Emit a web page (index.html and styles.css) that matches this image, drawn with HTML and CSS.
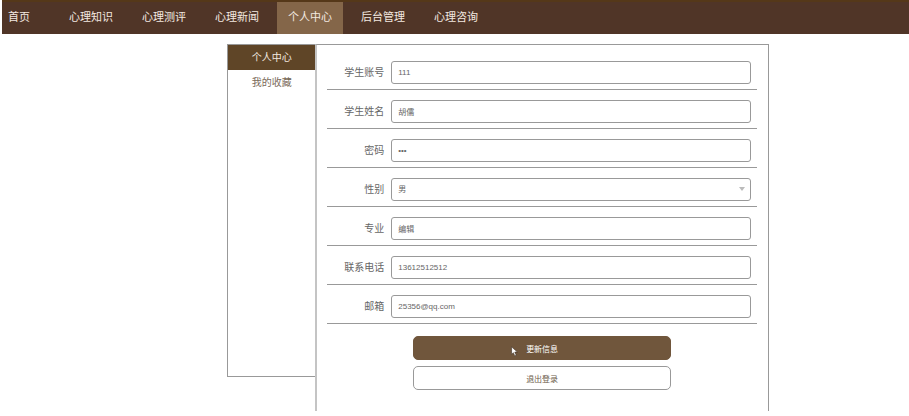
FILE: index.html
```html
<!DOCTYPE html>
<html lang="zh-CN">
<head>
    <meta charset="UTF-8">
    <meta name="viewport" content="width=device-width, initial-scale=1.0">
    <title>个人中心</title>
    <link rel="stylesheet" href="styles.css">
</head>
<body>

    <nav class="navbar">
        <a class="home" href="#">首页</a>
        <a href="#">心理知识</a>
        <a href="#">心理测评</a>
        <a href="#">心理新闻</a>
        <a class="active" href="#">个人中心</a>
        <a href="#">后台管理</a>
        <a href="#">心理咨询</a>
    </nav>

    <div class="center-container">
        <div class="side-menu">
            <a class="active" href="#">个人中心</a>
            <a href="#">我的收藏</a>
        </div>

        <form class="user-form">
            <div class="form-group">
                <label for="account">学生账号</label>
                <input type="text" id="account" name="account" value="111">
            </div>
            <div class="form-group">
                <label for="username">学生姓名</label>
                <input type="text" id="username" name="username" value="胡儒">
            </div>
            <div class="form-group">
                <label for="password">密码</label>
                <input type="password" id="password" name="password" value="111">
            </div>
            <div class="form-group">
                <label for="gender">性别</label>
                <div class="select-box">
                    <select id="gender" name="gender">
                        <option selected>男</option>
                        <option>女</option>
                    </select>
                </div>
            </div>
            <div class="form-group">
                <label for="major">专业</label>
                <input type="text" id="major" name="major" value="编辑">
            </div>
            <div class="form-group">
                <label for="phone">联系电话</label>
                <input type="text" id="phone" name="phone" value="13612512512">
            </div>
            <div class="form-group">
                <label for="email">邮箱</label>
                <input type="text" id="email" name="email" value="25356@qq.com">
            </div>

            <div class="buttons">
                <button type="button" class="btn-update">更新信息
                    <svg class="pointer" viewBox="0 0 12 18" aria-hidden="true">
                        <path d="M1 1v13l3-3 2.500 5.500 2.500-1-2.500-5.500h4.500z" fill="#fff" stroke="#3a2c20" stroke-width="1"/>
                    </svg>
                </button>
                <button type="button" class="btn-logout">退出登录</button>
            </div>
        </form>
    </div>

</body>
</html>
```
FILE: styles.css
```css
body {
    font-family: "Liberation Sans", "Noto Sans CJK SC", sans-serif;
    margin: 0;
    background-color: #fff;
}

a {
    text-decoration: none;
}

/* top navigation */
.navbar {
    display: flex;
    gap: 7px;
    height: 34px;
    margin-left: 2px;
    box-sizing: border-box;
    background-color: #503527;
    border-top: 2px solid #553819;
}

.navbar a {
    padding: 0 11px;
    color: #f3e9e0;
    font-size: 11px;
    line-height: 30px;
}

.navbar .home {
    padding: 0 21px 0 6px;
}

.navbar .active {
    background-color: #846649;
}

/* side menu and form */
.center-container {
    display: flex;
    align-items: flex-start;
    padding: 10px 140px 5px 25%;
}

.side-menu {
    flex: 0 0 88px;
    height: 333px;
    box-sizing: border-box;
    border: 1px solid #999;
    border-right: none;
}

.side-menu a {
    display: block;
    color: #7a6a5a;
    font-size: 10px;
    line-height: 25px;
    text-align: center;
}

.side-menu .active {
    background-color: #5f4527;
    color: #f3e9e0;
}

.user-form {
    flex: 1;
    min-height: 367px;
    box-sizing: border-box;
    padding: 6px 11px 0 10px;
    border: 1px solid #999;
    border-left: 2px solid #c4c4c4;
    border-bottom: none;
}

.form-group {
    display: flex;
    align-items: center;
    padding: 10px 6px 5px 0;
    border-bottom: 1px solid #999;
}

.form-group label {
    flex: 0 0 57px;
    margin-right: 7px;
    color: #666;
    font-size: 10px;
    line-height: 23px;
    text-align: right;
}

.form-group input,
.form-group select {
    flex: 1;
    width: 100%;
    height: 23px;
    box-sizing: border-box;
    margin: 0;
    padding: 0 6px;
    border: 1px solid #999;
    border-radius: 3px;
    background-color: #fff;
    color: #666;
    font-family: inherit;
    font-size: 8px;
}

.form-group select {
    display: block;
    appearance: none;
}

.select-box {
    flex: 1;
    position: relative;
}

/* arrow of the drop-down */
.select-box::after {
    content: "";
    position: absolute;
    top: 9px;
    right: 6px;
    border: 3px solid transparent;
    border-top: 4px solid #bbb;
    pointer-events: none;
}

.buttons {
    display: flex;
    flex-direction: column;
    gap: 6px;
    width: 60%;
    margin: 12px auto 0;
}

.buttons button {
    position: relative;
    height: 24px;
    padding: 0;
    border: 1px solid #999;
    border-radius: 5px;
    background-color: #fff;
    color: #6b5a48;
    font-family: inherit;
    font-size: 8px;
    cursor: pointer;
}

.buttons .btn-update {
    border-color: #70563c;
    background-color: #70563c;
    color: #fff;
}

.pointer {
    position: absolute;
    top: 9px;
    left: 38%;
    width: 7px;
    height: 11px;
}
```
